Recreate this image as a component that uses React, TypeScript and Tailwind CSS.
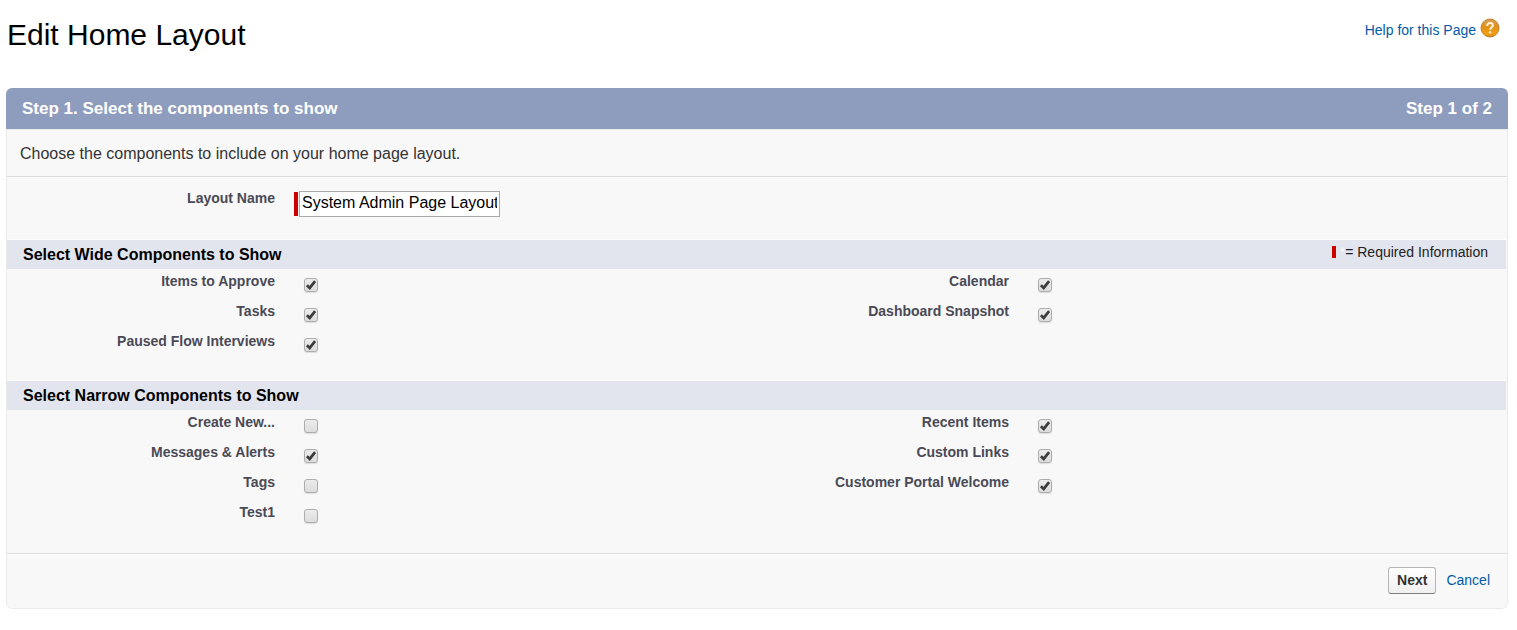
import React from 'react';

interface ComponentOption {
  label: string;
  checked: boolean;
}

interface OptionSectionProps {
  title: string;
  left: ComponentOption[];
  right: ComponentOption[];
  showLegend?: boolean;
}

const wideLeft: ComponentOption[] = [
  { label: 'Items to Approve', checked: true },
  { label: 'Tasks', checked: true },
  { label: 'Paused Flow Interviews', checked: true },
];

const wideRight: ComponentOption[] = [
  { label: 'Calendar', checked: true },
  { label: 'Dashboard Snapshot', checked: true },
];

const narrowLeft: ComponentOption[] = [
  { label: 'Create New...', checked: false },
  { label: 'Messages & Alerts', checked: true },
  { label: 'Tags', checked: false },
  { label: 'Test1', checked: false },
];

const narrowRight: ComponentOption[] = [
  { label: 'Recent Items', checked: true },
  { label: 'Custom Links', checked: true },
  { label: 'Customer Portal Welcome', checked: true },
];

const HelpIcon = () => (
  <svg width="20" height="20" viewBox="0 0 20 20" aria-hidden="true">
    <defs>
      <linearGradient id="helpFill" x1="0" y1="0" x2="0" y2="1">
        <stop offset="0%" stopColor="#d9a050" />
        <stop offset="45%" stopColor="#e39218" />
        <stop offset="85%" stopColor="#f2a010" />
        <stop offset="100%" stopColor="#c9790c" />
      </linearGradient>
    </defs>
    <circle cx="10" cy="10" r="9" fill="url(#helpFill)" stroke="#bd8339" />
    <path
      d="M7.2 7.9c0-1.8 1.1-2.8 2.8-2.8s2.8 1 2.8 2.4c0 2-2.7 2.1-2.7 4.3"
      fill="none"
      stroke="#fff3dc"
      strokeWidth="2"
    />
    <circle cx="10.1" cy="14.2" r="1.2" fill="#fff3dc" />
  </svg>
);

const CheckOption: React.FC<{ option: ComponentOption }> = ({ option }) => {
  const id = option.label.toLowerCase().replace(/[^a-z0-9]+/g, '-');

  return (
    <div className="flex h-[30px] items-start">
      <label htmlFor={id} className="w-[252px] pt-1 text-right text-sm leading-4 font-bold text-[#4a4a56]">
        {option.label}
      </label>
      <span className="ml-[29px] mt-[9px] grid">
        <input
          id={id}
          type="checkbox"
          defaultChecked={option.checked}
          className="peer col-start-1 row-start-1 size-[14px] appearance-none rounded-[3px] border border-[#adadad] bg-linear-to-b from-[#ececec] to-[#dcdcdc] shadow-[0_1px_1px_#dddddd]"
        />
        <svg
          viewBox="0 0 14 14"
          className="pointer-events-none invisible col-start-1 row-start-1 size-[14px] peer-checked:visible"
          aria-hidden="true"
        >
          <path d="M2.9 7.3l2.8 2.6L11.1 3.1" fill="none" stroke="#3c3c3c" strokeWidth="2.7" />
        </svg>
      </span>
    </div>
  );
};

const OptionSection: React.FC<OptionSectionProps> = ({ title, left, right, showLegend }) => (
  <section>
    <div className="mr-px flex h-[30px] items-center justify-between border-t border-white bg-[#e3e5ee] pr-[18px] pl-4">
      <h3 className="text-base leading-5 font-bold text-black">{title}</h3>
      {showLegend && (
        <p className="flex items-center pb-1.5 text-sm leading-4 text-[#222222]">
          <span className="mr-1 h-3 w-1 bg-[#cc0000]" />
          <span className="text-[#f8f8f8]">*</span>= Required Information
        </p>
      )}
    </div>
    <div className="grid grid-cols-2 px-4">
      <div>
        {left.map((option) => (
          <CheckOption key={option.label} option={option} />
        ))}
      </div>
      <div>
        {right.map((option) => (
          <CheckOption key={option.label} option={option} />
        ))}
      </div>
    </div>
  </section>
);

const App: React.FC = () => {
  return (
    <main className="bg-white pr-[9px] pl-[6px] font-['Liberation_Sans',Arial,sans-serif]">
      <header className="flex h-[88px] items-start justify-between pr-2 pl-px">
        <h1 className="pt-[17px] text-[30px] leading-9 text-black">Edit Home Layout</h1>
        <a href="#help" className="flex items-start gap-1 pt-[18px] text-sm leading-6 text-[#015ba7]">
          Help for this Page
          <HelpIcon />
        </a>
      </header>

      <form className="overflow-hidden rounded-md" onSubmit={(e) => e.preventDefault()}>
        <div className="flex h-[41px] items-center justify-between bg-[#8e9dbe] px-4 text-[17px] font-bold text-white">
          <h2>Step 1. Select the components to show</h2>
          <span>Step 1 of 2</span>
        </div>

        <div className="rounded-b-md border border-[#eaeaea] bg-[#f8f8f8]">
          <p className="border-b border-[#dbdbdb] px-[13px] pt-3 pb-[10px] text-base leading-6 text-[#333333]">
            Choose the components to include on your home page layout.
          </p>

          <div className="flex h-[62px] items-start border-t border-white px-4">
            <label
              htmlFor="layout-name"
              className="w-[252px] pt-3 text-right text-sm leading-4 font-bold text-[#4a4a56]"
            >
              Layout Name
            </label>
            <div className="mt-[13px] ml-[19px] flex items-center gap-px">
              <span className="h-6 w-1 bg-[#cc0000]" />
              <input
                id="layout-name"
                type="text"
                required
                defaultValue="System Admin Page Layout"
                className="h-[26px] w-[201px] border border-[#a9a9a9] bg-white px-0.5 pb-0.5 text-base text-black"
              />
            </div>
          </div>

          <OptionSection title="Select Wide Components to Show" left={wideLeft} right={wideRight} showLegend />
          <div className="mt-[21px] mb-[23px]">
            <OptionSection title="Select Narrow Components to Show" left={narrowLeft} right={narrowRight} />
          </div>

          <footer className="border-t border-[#dbdbdb]">
            <div className="flex items-center justify-end gap-[10px] border-t border-white pt-3 pr-[17px] pb-[14px] pl-4 text-sm">
              <button
                type="submit"
                className="h-[27px] rounded-[3px] border border-[#b5b5b5] border-b-[#7f7f7f] bg-linear-to-b from-white to-[#f0f0f0] px-2 pb-0.5 font-bold text-[#333333]"
              >
                Next
              </button>
              <a href="#cancel" className="pb-0.5 text-[#015ba7]">
                Cancel
              </a>
            </div>
          </footer>
        </div>
      </form>
    </main>
  );
};

export default App;
